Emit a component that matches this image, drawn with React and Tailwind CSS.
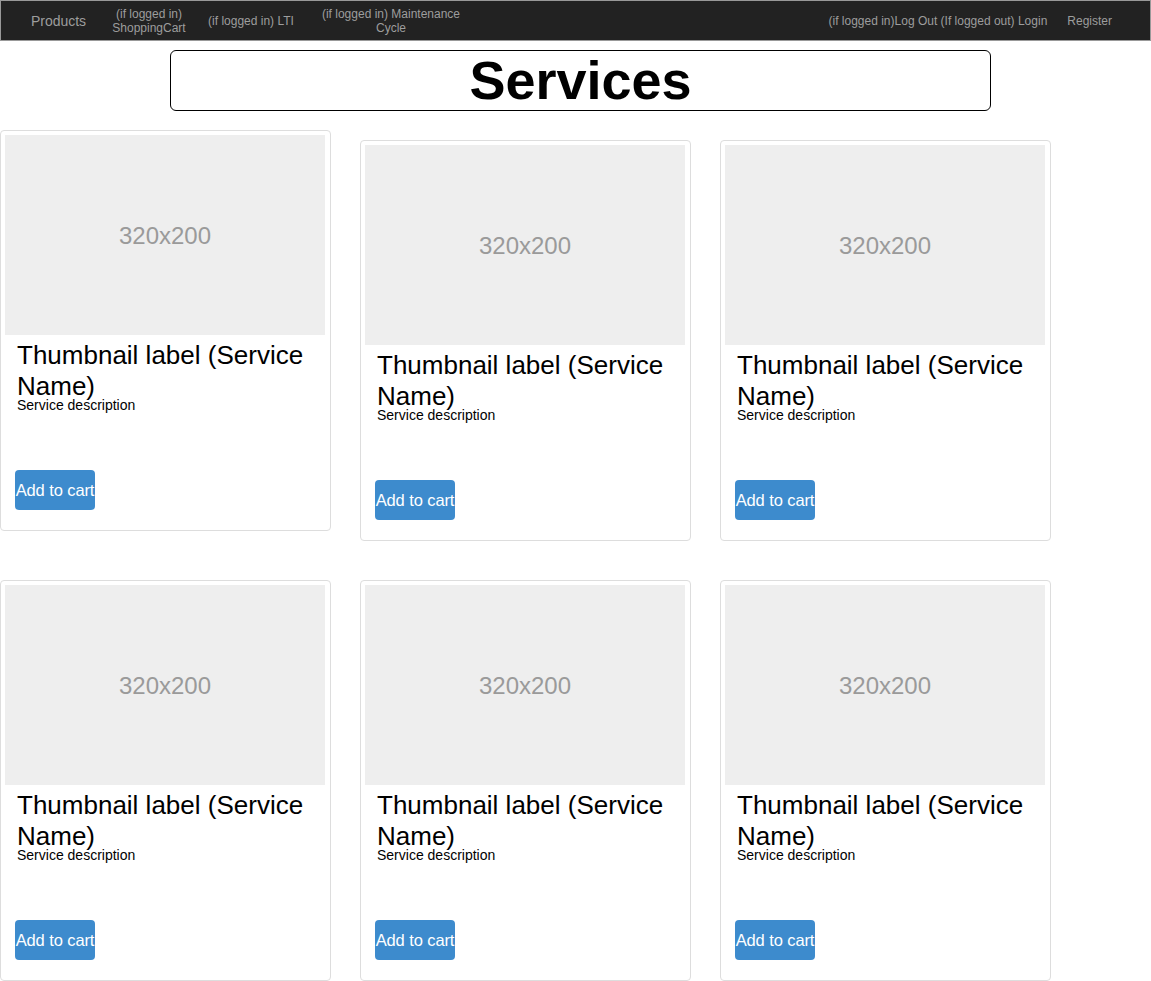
import React from "react"

const font = { fontFamily: '"Liberation Sans", Arial, sans-serif' }

const NavItem = ({ className = "", children }) => (
  <div className={`text-center text-[12px] leading-[14px] text-[#9d9d9d] ${className}`}>
    {children}
  </div>
)

const ServiceCard = ({ className = "" }) => (
  <div className={`flex h-[401px] w-[331px] flex-col rounded-[4px] border border-[#dddddd] bg-white p-[4px] pr-[5px] ${className}`}>
    <div className="flex h-[200px] w-[320px] items-center justify-center bg-[#eeeeee] pt-[2px] text-[24px] text-[#9a9a9a]">
      320x200
    </div>
    <div className="flex flex-1 flex-col px-[12px] pt-[5px]">
      <h3 className="text-[26px] leading-[31px] text-black">
        Thumbnail label (Service Name)
      </h3>
      <p className="-mt-[7px] text-[14px] leading-[20px] text-black">
        Service description
      </p>
      <div className="mt-auto pb-[16px]">
        <button className="-ml-[2px] h-[40px] w-[80px] whitespace-nowrap rounded-[4px] bg-[#3d8bcd] text-[16.5px] leading-[40px] tracking-[-0.1px] text-white">
          Add to cart
        </button>
      </div>
    </div>
  </div>
)

const App = () => {
  return (
    <div className="min-h-screen bg-white" style={font}>
      <nav className="flex h-[41px] items-center border border-[#999999] bg-[#222222]">
        <div className="flex items-center">
          <div className="ml-[15px] w-[85px] pt-[2px] text-center text-[14px] text-[#9d9d9d]">Products</div>
          <NavItem className="w-[96px]">
            (if logged in)
            <br />
            ShoppingCart
          </NavItem>
          <NavItem className="w-[108px]">(if logged in) LTI</NavItem>
          <NavItem className="w-[172px]">
            (if logged in) Maintenance
            <br />
            Cycle
          </NavItem>
        </div>
        <div className="ml-auto flex items-center gap-[20px] pr-[38px]">
          <NavItem>(if logged in)Log Out (If logged out) Login</NavItem>
          <NavItem>Register</NavItem>
        </div>
      </nav>

      <div className="ml-[170px] mt-[9px] flex h-[61px] w-[821px] items-center justify-center rounded-[6px] border border-black">
        <h1 className="text-[54px] font-bold leading-[61px] text-black">Services</h1>
      </div>

      <div className="flex items-start gap-[29px]">
        <ServiceCard className="mt-[19px]" />
        <ServiceCard className="mt-[29px]" />
        <ServiceCard className="mt-[29px]" />
      </div>

      <div className="mt-[39px] flex items-start gap-[29px]">
        <ServiceCard />
        <ServiceCard />
        <ServiceCard />
      </div>
    </div>
  )
}

export default App
